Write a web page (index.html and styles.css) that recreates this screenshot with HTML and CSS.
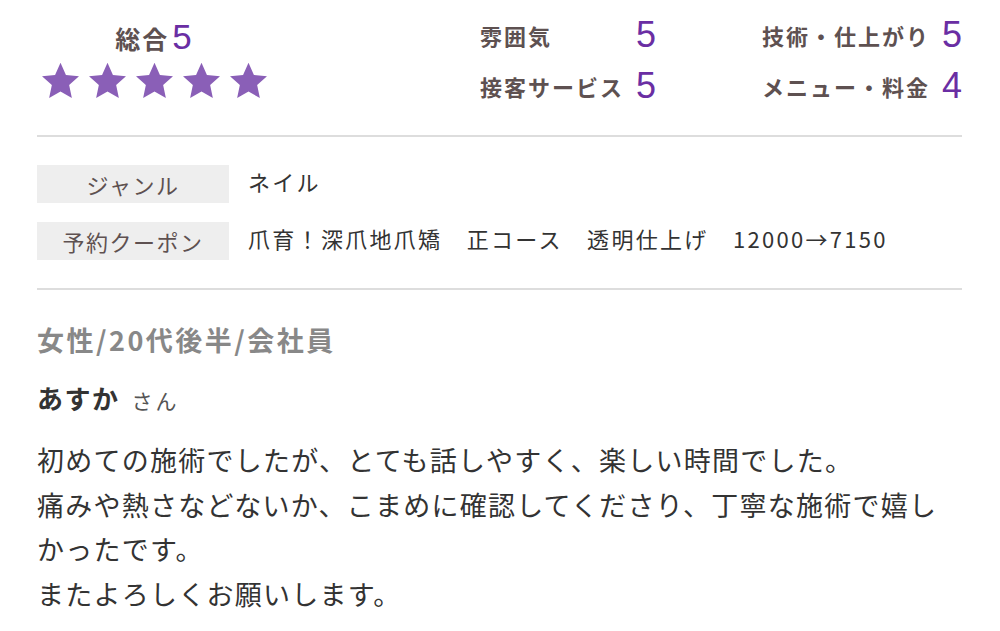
FILE: index.html
```html
<!DOCTYPE html>
<html lang="ja">
<head>
    <meta charset="UTF-8">
    <meta name="viewport" content="width=device-width, initial-scale=1.0">
    <title>口コミ</title>
    <link rel="stylesheet" href="styles.css">
</head>
<body>
    <div class="review">
        <!-- Ratings -->
        <div class="summary">
            <div class="total">
                <div class="total-line">総合<span class="total-num">5</span></div>
                <div class="stars">
                    <svg class="star" viewBox="0 0 24 23"><polygon points="12,0.5 15.2,7.6 22.9,8.4 17.1,13.6 18.7,21.3 12,17.4 5.3,21.3 6.9,13.6 1.1,8.4 8.8,7.6"/></svg>
                    <svg class="star" viewBox="0 0 24 23"><polygon points="12,0.5 15.2,7.6 22.9,8.4 17.1,13.6 18.7,21.3 12,17.4 5.3,21.3 6.9,13.6 1.1,8.4 8.8,7.6"/></svg>
                    <svg class="star" viewBox="0 0 24 23"><polygon points="12,0.5 15.2,7.6 22.9,8.4 17.1,13.6 18.7,21.3 12,17.4 5.3,21.3 6.9,13.6 1.1,8.4 8.8,7.6"/></svg>
                    <svg class="star" viewBox="0 0 24 23"><polygon points="12,0.5 15.2,7.6 22.9,8.4 17.1,13.6 18.7,21.3 12,17.4 5.3,21.3 6.9,13.6 1.1,8.4 8.8,7.6"/></svg>
                    <svg class="star" viewBox="0 0 24 23"><polygon points="12,0.5 15.2,7.6 22.9,8.4 17.1,13.6 18.7,21.3 12,17.4 5.3,21.3 6.9,13.6 1.1,8.4 8.8,7.6"/></svg>
                </div>
            </div>
            <div class="ratings">
                <div class="rating"><span class="rating-label">雰囲気</span><span class="rating-num">5</span></div>
                <div class="rating"><span class="rating-label">技術・仕上がり</span><span class="rating-num">5</span></div>
                <div class="rating"><span class="rating-label">接客サービス</span><span class="rating-num">5</span></div>
                <div class="rating"><span class="rating-label">メニュー・料金</span><span class="rating-num">4</span></div>
            </div>
        </div>

        <!-- Genre / Coupon -->
        <div class="info">
            <div class="info-row">
                <div class="info-label">ジャンル</div>
                <div class="info-value">ネイル</div>
            </div>
            <div class="info-row">
                <div class="info-label">予約クーポン</div>
                <div class="info-value">爪育！深爪地爪矯　正コース　透明仕上げ　12000→7150</div>
            </div>
        </div>

        <!-- Review body -->
        <div class="reviewer-meta">女性/20代後半/会社員</div>
        <div class="reviewer-name">あすか<span class="honorific">さん</span></div>
        <p class="comment">初めての施術でしたが、とても話しやすく、楽しい時間でした。<br>痛みや熱さなどないか、こまめに確認してくださり、丁寧な施術で嬉しかったです。<br>またよろしくお願いします。</p>
    </div>
</body>
</html>
```

FILE: styles.css
```css
body {
    font-family: "Noto Sans CJK JP", "Noto Sans", sans-serif;
    background-color: #fff;
    color: #333;
    margin: 0;
}

.review {
    padding: 0 38px 0 37px;
}

.summary {
    display: flex;
    justify-content: space-between;
    align-items: flex-start;
    padding-top: 18px;
    padding-bottom: 27px;
    border-bottom: 2px solid #ddd;
}

.total {
    width: 235px;
    text-align: center;
}

.total-line {
    height: 40px;
    font-size: 25px;
    font-weight: bold;
    line-height: 40px;
    letter-spacing: 2px;
    color: #5e5151;
}

.total-num {
    font-family: "Liberation Sans", sans-serif;
    font-weight: normal;
    font-size: 35px;
    line-height: 1;
    color: #6a2ea3;
    margin-left: 3px;
}

.stars {
    display: flex;
    justify-content: center;
    gap: 6px;
    margin-top: 4px;
}

.star {
    width: 41px;
    height: 39px;
    fill: #8a5fb7;
}

.ratings {
    display: grid;
    grid-template-columns: 176px 200px;
    column-gap: 106px;
    row-gap: 7px;
    margin-top: -5px;
}

.rating {
    display: flex;
    justify-content: space-between;
    align-items: center;
    line-height: 44px;
}

.rating-label {
    font-size: 22px;
    font-weight: bold;
    letter-spacing: 2px;
    color: #5e5151;
}

.rating-num {
    font-family: "Liberation Sans", sans-serif;
    font-size: 36px;
    color: #6a2ea3;
}

.info {
    display: flex;
    flex-direction: column;
    gap: 19px;
    padding-top: 28px;
    padding-bottom: 28px;
    border-bottom: 2px solid #ddd;
}

.info-row {
    display: flex;
    gap: 19px;
}

.info-label {
    width: 192px;
    flex-shrink: 0;
    height: 38px;
    line-height: 38px;
    background-color: #eee;
    color: #5e5151;
    font-size: 22px;
    letter-spacing: 1.5px;
    text-align: center;
}

.info-value {
    font-size: 22px;
    line-height: 32px;
    color: #333;
    letter-spacing: 2.3px;
}

.reviewer-meta {
    margin-top: 30px;
    font-size: 27px;
    font-weight: bold;
    line-height: 40px;
    letter-spacing: 2.5px;
    color: #888;
}

.reviewer-name {
    margin-top: 18px;
    font-size: 26px;
    font-weight: bold;
    line-height: 40px;
    letter-spacing: 1.5px;
    color: #333;
}

.honorific {
    font-size: 21px;
    font-weight: normal;
    color: #555;
    margin-left: 12px;
    letter-spacing: 3px;
}

.comment {
    margin: 18px 0 0;
    font-size: 27px;
    letter-spacing: 1.25px;
    line-height: 44.5px;
    color: #333;
}
```
